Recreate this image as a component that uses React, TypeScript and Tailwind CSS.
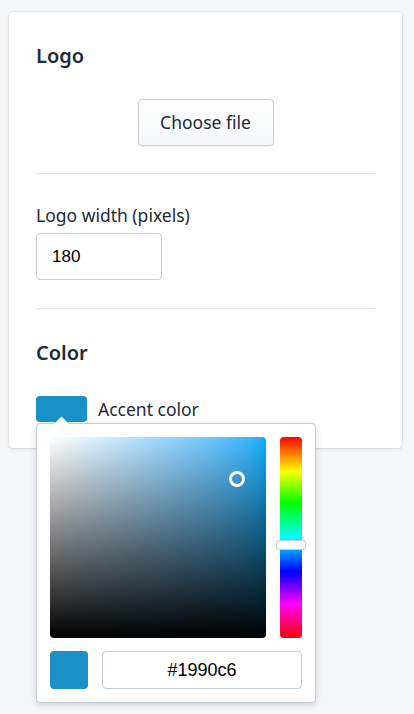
import React from 'react';

const font = { fontFamily: '"Noto Sans", "Open Sans", sans-serif' };

export default function App() {
  return (
    <div className="min-h-[714px] bg-[#f4f6f8] pt-[12px] pl-[9px] pr-[12px]" style={font}>
      <div className="rounded-[4px] bg-white px-[27px] pt-[30px] pb-[26px] shadow-[0_0_0_1px_rgba(63,63,68,0.05),0_1px_3px_0_rgba(63,63,68,0.15)] text-[#212b36]">
        {/* Logo */}
        <h2 className="text-[20px] leading-[28px] font-semibold">Logo</h2>
        <div className="mt-[29px] flex justify-center">
          <button className="h-[47px] w-[136px] rounded-[4px] border border-[#c4cdd5] bg-gradient-to-b from-white to-[#f4f6f8] text-[17.5px] shadow-[0_1px_0_0_rgba(22,29,37,0.05)]">
            Choose file
          </button>
        </div>
        <div className="mt-[27px] border-t border-[#e3e5e7]" />

        {/* Width */}
        <label className="mt-[29px] block text-[17.5px] leading-[24px]">Logo width (pixels)</label>
        <input
          className="mt-[6px] block h-[47px] w-[126px] rounded-[4px] border border-[#c4cdd5] px-[15px] text-[17px] text-black outline-none"
          style={{ fontFamily: '"Liberation Sans", Arial, sans-serif' }}
          defaultValue="180"
        />
        <div className="mt-[28px] border-t border-[#e3e5e7]" />

        {/* Color */}
        <h2 className="mt-[30px] text-[20px] leading-[28px] font-semibold">Color</h2>
        <div className="relative mt-[29px] flex items-center gap-[11px]">
          <div className="h-[26px] w-[51px] rounded-[4px] bg-[#1990c6]" />
          <span className="text-[17.5px] leading-[24px]">Accent color</span>

          {/* Picker popover */}
          <div className="absolute left-0 top-[27px] z-10 w-[280px] rounded-[4px] border border-[#c4cdd5] bg-white p-[13px] shadow-[0_2px_6px_rgba(0,0,0,0.15)]">
            <div className="absolute left-[19px] top-[-6px] h-[11px] w-[11px] rotate-45 rounded-tl-[2px] border-l border-t border-[#c4cdd5] bg-white" />
            <div className="flex gap-[14px]">
              <div className="relative h-[201px] w-[216px] overflow-hidden rounded-[4px] bg-gradient-to-r from-white to-[#00b1ff]">
                <div className="absolute inset-0 bg-gradient-to-b from-transparent to-black" />
                <div className="absolute left-[179px] top-[34px] h-[16px] w-[16px] rounded-full border-[3px] border-white" />
              </div>
              <div className="relative h-[201px] w-[22px]">
                <div className="h-full w-full rounded-[4px] bg-[linear-gradient(to_bottom,#ff0000_0%,#ffff00_17%,#00ff00_33%,#00ffff_50%,#0000ff_67%,#ff00ff_83%,#ff0000_100%)]" />
                <div className="absolute left-[-4px] top-[103px] h-[10px] w-[30px] rounded-[3px] border border-[#c4cdd5] bg-white" />
              </div>
            </div>
            <div className="mt-[13px] flex gap-[14px]">
              <div className="h-[38px] w-[38px] rounded-[4px] bg-[#1990c6]" />
              <div
                className="flex h-[38px] flex-1 items-center justify-center rounded-[4px] border border-[#c4cdd5] text-[18px] text-black"
                style={{ fontFamily: '"Liberation Sans", Arial, sans-serif' }}
              >
                #1990c6
              </div>
            </div>
          </div>
        </div>
      </div>
    </div>
  );
}
